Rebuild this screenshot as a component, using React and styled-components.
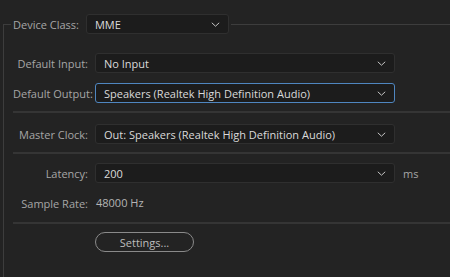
import styled, { createGlobalStyle } from 'styled-components'

const Global = createGlobalStyle`
  html, body {
    margin: 0;
    background: #232323;
    width: 450px;
    height: 277px;
    overflow: hidden;
  }
  body {
    font-family: "Open Sans", "Noto Sans", sans-serif;
    font-size: 11px;
  }
`

const Panel = styled.div`
  padding: 14px 0 0 3px;
  height: 263px;
`

const Frame = styled.fieldset`
  margin: 0;
  padding: 19px 0 0 9px;
  border: none;
  border-top: 1px solid #3d3d3d;
  border-left: 1px solid #3d3d3d;
  min-inline-size: 0;
  height: 100%;
  box-sizing: border-box;
`

const Legend = styled.legend`
  margin-left: -2px;
  padding: 0 2px;
  display: flex;
  align-items: center;
  gap: 7px;
`

const LegendLabel = styled.span`
  color: #a6a6a6;
`

const Group = styled.div`
  display: grid;
  grid-template-columns: 75px 300px auto;
  column-gap: 7px;
  row-gap: 10px;
  align-items: center;
`

const Label = styled.span`
  color: #a6a6a6;
  text-align: right;
  white-space: nowrap;
`

const Value = styled.span`
  color: #b4b4b4;
  padding-left: 1px;
  line-height: 20px;
`

const Unit = styled.span`
  color: #a6a6a6;
  padding-left: 1px;
`

const Select = styled.div`
  box-sizing: border-box;
  width: ${p => p.$width || '300px'};
  height: 20px;
  display: flex;
  align-items: center;
  justify-content: space-between;
  padding: 0 8px 0 8px;
  background: #1c1c1c;
  border: 1px solid ${p => (p.$focus ? '#4f86c0' : '#2f2f2f')};
  border-radius: 3px;
  color: #dadada;
  white-space: nowrap;
`

const Divider = styled.div`
  height: 2px;
  background: #353535;
  margin: ${p => p.$margin};
`

const Row = styled.div`
  padding-left: 82px;
`

const Button = styled.button`
  box-sizing: border-box;
  width: 99px;
  height: 20px;
  border: 1px solid #8a8a8a;
  border-radius: 10px;
  background: transparent;
  color: #bdbdbd;
  font-family: inherit;
  font-size: 11px;
  padding: 0;
`

function Chevron() {
  return (
    <svg width="9" height="5" viewBox="0 0 9 5">
      <polyline points="0.8,0.8 4.5,4.2 8.2,0.8" fill="none" stroke="#c4c4c4" strokeWidth="1" />
    </svg>
  )
}

function Dropdown({ value, width, focus }) {
  return (
    <Select $width={width} $focus={focus}>
      <span>{value}</span>
      <Chevron />
    </Select>
  )
}

export default function App() {
  return (
    <>
      <Global />
      <Panel>
        <Frame>
          <Legend>
            <LegendLabel>Device Class:</LegendLabel>
            <Dropdown value="MME" width="143px" />
          </Legend>
          <Group>
            <Label>Default Input:</Label>
            <Dropdown value="No Input" />
            <span />
            <Label>Default Output:</Label>
            <Dropdown value="Speakers (Realtek High Definition Audio)" focus />
            <span />
          </Group>
          <Divider $margin="8px 0 11px" />
          <Group>
            <Label>Master Clock:</Label>
            <Dropdown value="Out: Speakers (Realtek High Definition Audio)" />
            <span />
          </Group>
          <Divider $margin="8px 0 9px" />
          <Group>
            <Label>Latency:</Label>
            <Dropdown value="200" />
            <Unit>ms</Unit>
            <Label>Sample Rate:</Label>
            <Value>48000 Hz</Value>
            <span />
          </Group>
          <Divider $margin="9px 0 8px" />
          <Row>
            <Button>Settings...</Button>
          </Row>
        </Frame>
      </Panel>
    </>
  )
}
